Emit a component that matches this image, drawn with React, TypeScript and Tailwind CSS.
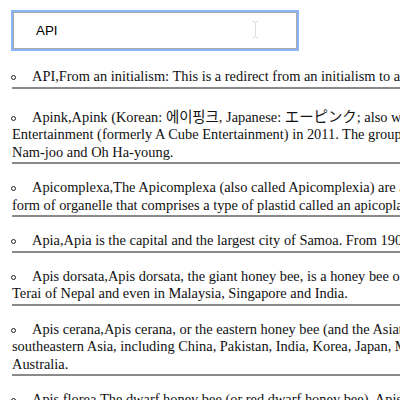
import React from 'react';

const SERIF = '"Liberation Serif", "Noto Sans CJK KR", "Noto Sans CJK JP", serif';

// each entry is a list of visual lines; the page is wider than the window so the tail is clipped
const RESULTS: string[][] = [
  ['API,From an initialism: This is a redirect from an initialism to a page that has the name spelled out in full.'],
  [
    'Apink,Apink (Korean: 에이핑크, Japanese: エーピンク; also written as A Pink) is a South Korean girl group formed by Play M',
    'Entertainment (formerly A Cube Entertainment) in 2011. The group consists of Park Cho-rong, Yoon Bo-mi, Jung Eun-ji, Kim',
    'Nam-joo and Oh Ha-young.',
  ],
  [
    'Apicomplexa,The Apicomplexa (also called Apicomplexia) are a large phylum of parasitic alveolates. Most of them possess a unique',
    'form of organelle that comprises a type of plastid called an apicoplast, and an apical complex structure.',
  ],
  ['Apia,Apia is the capital and the largest city of Samoa. From 1900 to 1919, it was the capital of German Samoa.'],
  [
    'Apis dorsata,Apis dorsata, the giant honey bee, is a honey bee of South and Southeast Asia, found mainly in forested areas such as the',
    'Terai of Nepal and even in Malaysia, Singapore and India.',
  ],
  [
    'Apis cerana,Apis cerana, or the eastern honey bee (and the Asiatic honey bee or Asian honey bee), is a species of honey bee native to south,',
    'southeastern Asia, including China, Pakistan, India, Korea, Japan, Malaysia, Nepal, Bangladesh, Papua New Guinea and the Solomon Islands, and',
    'Australia.',
  ],
  ['Apis florea,The dwarf honey bee (or red dwarf honey bee), Apis florea, is one of two species of small, wild honey bees of southern Asia.'],
];

export default function App() {
  return (
    <div className="relative w-[400px] h-[400px] overflow-hidden bg-white">
      <div className="relative ml-[13px] mt-[12px] w-[284px] h-[37px] border border-[#a9a9a9] outline-2 outline-[#8cb4f8] flex items-center pl-[22px]">
        <span className="text-[13.33px] text-black" style={{ fontFamily: '"Liberation Sans", Arial, sans-serif' }}>
          API
        </span>
        <svg className="absolute left-[238px] top-[8px]" width="7" height="17" viewBox="0 0 7 17">
          <path d="M0.5 0.5h2.5M4 0.5h2.5M3.5 1v15M0.5 16.5h2.5M4 16.5h2.5" stroke="#dcdcdc" strokeWidth="1" fill="none" />
        </svg>
      </div>

      <ul className="ml-[12px] mt-[19px] w-[900px] text-[#111] text-[14.4px] leading-[17.5px]" style={{ fontFamily: SERIF }}>
        {RESULTS.map((lines, i) => (
          <li
            key={i}
            className={`whitespace-nowrap pb-[1px] border-b-2 border-[#8a8a8a] ${i === 0 ? 'mb-[20px]' : 'mb-[15px]'}`}
          >
            {lines.map((line, j) => (
              <div key={j}>
                {j === 0 && (
                  <span className="inline-block align-middle ml-[-1px] mr-[16px] w-[5px] h-[5px] rounded-full border border-[#222]" />
                )}
                {line}
              </div>
            ))}
          </li>
        ))}
      </ul>
    </div>
  );
}
